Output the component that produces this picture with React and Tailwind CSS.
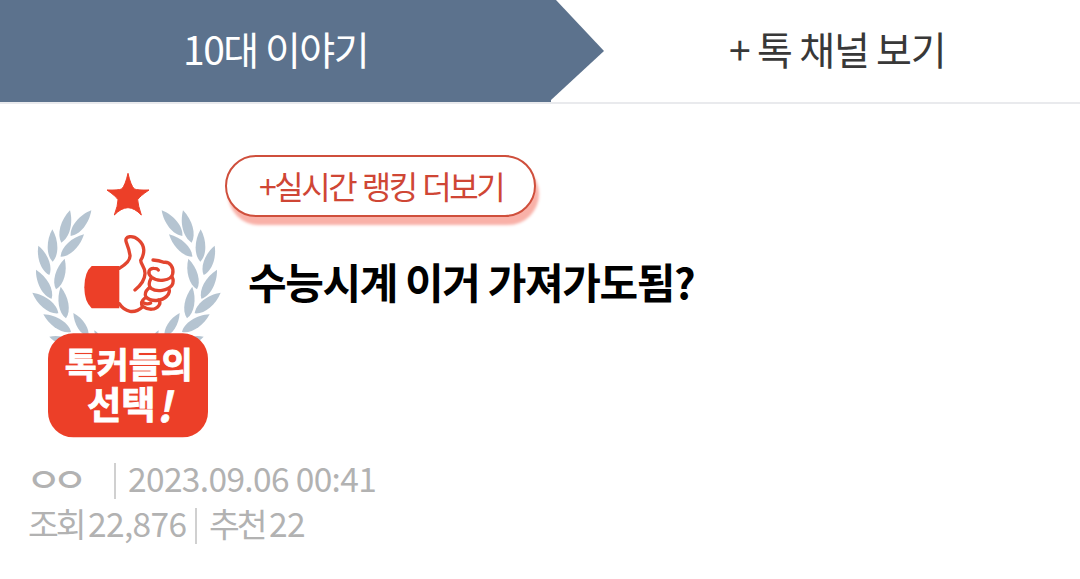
import React from 'react';

// [baseX, baseY, tipX, tipY] for one side of the wreath
const leaves = [
  [124, 248, 150, 151],
  [152, 228, 214, 151],
  [98, 305, 97, 208],
  [122, 290, 192, 223],
  [88, 345, 55, 257],
  [108, 388, 134, 296],
  [95, 416, 48, 329],
  [138, 475, 122, 380],
  [115, 460, 37, 398],
  [153, 516, 70, 463],
  [205, 530, 160, 459],
  [160, 552, 88, 530],
  [240, 540, 223, 511],
];

const leafPath = ([x1, y1, x2, y2]) => {
  const dx = x2 - x1;
  const dy = y2 - y1;
  const nx = -dy * 0.2;
  const ny = dx * 0.2;
  return `M${x1} ${y1} C${x1 + dx * 0.2 + nx} ${y1 + dy * 0.2 + ny} ${x1 + dx * 0.65 + nx} ${y1 + dy * 0.65 + ny} ${x2} ${y2} C${x1 + dx * 0.65 - nx} ${y1 + dy * 0.65 - ny} ${x1 + dx * 0.2 - nx} ${y1 + dy * 0.2 - ny} ${x1} ${y1}Z`;
};

const Wreath = () => (
  <g fill="#b5c4d1">
    {leaves.map((leaf) => (
      <path key={leaf.join()} d={leafPath(leaf)} />
    ))}
  </g>
);

const TalkerBadge = () => (
  <svg className="block h-[285px] w-[205px] shrink-0" viewBox="0 0 615 855">
    <Wreath />
    <g transform="translate(639 0) scale(-1 1)">
      <Wreath />
    </g>

    {/* star */}
    <path
      d="M324 40 Q332 76 343 87 Q354 91 387 90 Q359 109 353 119 Q354 136 364 165 Q344 144 324 143 Q303 144 283 165 Q294 136 294 119 Q288 109 261 90 Q294 91 305 87 Q316 76 324 40Z"
      fill="#ec3f28"
      stroke="#ec3f28"
      strokeWidth="3"
      strokeLinejoin="round"
    />

    {/* thumb up */}
    <path d="M215 318 H298 V445 H215 Q193 425 193 382 Q193 337 215 318Z" fill="#ec3f28" />
    <g fill="none" stroke="#e2452f" strokeWidth="10" strokeLinecap="round" strokeLinejoin="round">
      <path d="M298 325 Q332 305 330 286 Q328 270 319 247 C311 226 340 226 355 239 C377 257 374 282 362 301 C362 314 376 321 375 341 Q374 367 345 390" />
      <path d="M298 431 Q310 450 330 454 Q350 457 368 440" />
      <path d="M399 300 Q417 301 431 307 C451 304 462 323 458 342 C453 364 412 366 395 352 C380 339 387 324 402 325 Q412 325 415 330" />
      <path d="M393 355 Q382 375 393 385 C410 397 444 392 456 376 Q463 363 456 350" />
      <path d="M386 385 Q371 399 378 411 C393 427 426 424 441 408 Q452 395 446 386" />
      <path d="M375 414 Q359 426 368 439 C385 451 407 451 417 436 Q423 428 416 420" />
      <path d="M370 428 Q381 435 392 429" />
    </g>

    <rect x="84" y="520" width="480" height="312" rx="76" fill="#ec3f28" />
    <g fill="#fff" fontFamily="'Noto Sans CJK KR', sans-serif" fontWeight="700">
      <g stroke="#fff" strokeWidth="2.5">
        <text x="134" y="654" fontSize="105" textLength="384" lengthAdjust="spacingAndGlyphs">톡커들의</text>
        <text x="201" y="777" fontSize="112" textLength="206" lengthAdjust="spacingAndGlyphs">선택</text>
      </g>
      <text transform="translate(410 785) skewX(-12)" fontSize="124" stroke="#fff" strokeWidth="2">!</text>
    </g>
  </svg>
);

const ChannelTabs = () => (
  <nav className="flex h-[104px] border-b-2 border-[#e9eaed] text-[39px] leading-[97px]">
    <div className="relative w-[551px] bg-[#5c728d] pl-[183px] tracking-[-1.5px] text-white">
      10대 이야기
      <svg className="absolute left-[551px] top-0 h-[102px] w-[53px]" viewBox="0 0 53 102">
        <path d="M0 0 H5 L53 51 L0 100Z" fill="#5c728d" />
      </svg>
    </div>
    <div className="pl-[178px] tracking-[-1.2px] text-[#383838]">+ 톡 채널 보기</div>
  </nav>
);

const PostMeta = () => (
  <div className="pl-7 pt-2.5 text-[33.5px] leading-[45px] tracking-[-0.65px] text-[#b2b2b2]">
    <div className="flex h-[45px] items-center">
      <span className="w-[86px]">
        <span className="-ml-0.5 inline-block origin-left scale-x-115 font-medium tracking-[-8px]">ㅇㅇ</span>
      </span>
      <span className="mt-1.5 h-9 w-0.5 bg-[#d0d0d0]" />
      <span className="pl-3">2023.09.06 00:41</span>
    </div>
    <div className="flex h-[45px] items-center">
      <span className="w-[60px] tracking-[-3px]">조회</span>
      <span className="w-[107px]">22,876</span>
      <span className="mt-1.5 h-9 w-0.5 bg-[#d0d0d0]" />
      <span className="w-[72px] pl-3 tracking-[-3px]">추천</span>
      <span>22</span>
    </div>
  </div>
);

export default function App() {
  return (
    <div className="h-[579px] w-[1080px] overflow-hidden bg-white font-['Noto_Sans_CJK_KR',sans-serif]">
      <ChannelTabs />
      <main>
        <div className="flex pl-5 pt-14">
          <TalkerBadge />
          <div className="-mt-[5px]">
            <button className="block h-[62px] w-[311px] rounded-[31px] border-2 border-[#cf4f3c] bg-white pb-[3px] pl-8 text-left text-[32px] leading-[54px] tracking-[-2.5px] [word-spacing:2px] whitespace-nowrap text-[#cf4635] shadow-[3px_8px_3px_#f9b1a8]">
              +실시간 랭킹 더보기
            </button>
            <h1 className="ml-[23px] mt-[31px] text-[42px] font-bold leading-[66px] tracking-[-1.4px] whitespace-nowrap text-black">
              수능시계 이거 가져가도됨?
            </h1>
          </div>
        </div>
        <PostMeta />
      </main>
    </div>
  );
}
